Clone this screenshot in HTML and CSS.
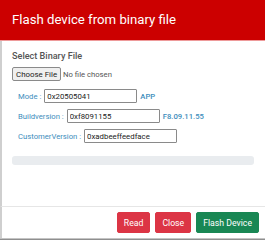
FILE: index.html
```html
<!DOCTYPE html>
<html>
<head>
<meta charset="utf-8">
<link rel="stylesheet" href="styles.css">
</head>
<body>
<div class="dialog">
  <div class="modal-header">
    <h5 class="modal-title">Flash device from binary file</h5>
  </div>
  <div class="modal-body">
    <div class="section-label">Select Binary File</div>
    <input class="file-input" type="file">
    <div class="fields">
      <div class="field-row">
        <span class="field-label">Mode :</span>
        <input class="field-input" type="text" value="0x20505041">
        <span class="field-extra">APP</span>
      </div>
      <div class="field-row">
        <span class="field-label">Buildversion :</span>
        <input class="field-input" type="text" value="0xf8091155">
        <span class="field-extra">F8.09.11.55</span>
      </div>
      <div class="field-row">
        <span class="field-label">CustomerVersion :</span>
        <input class="field-input" type="text" value="0xadbeeffeedface">
      </div>
    </div>
    <div class="progress"></div>
  </div>
  <div class="modal-footer">
    <button class="btn btn-danger">Read</button>
    <button class="btn btn-danger">Close</button>
    <button class="btn btn-success">Flash Device</button>
  </div>
</div>
</body>
</html>
```

FILE: styles.css
```css
* { box-sizing: border-box; }
html, body {
  margin: 0;
  padding: 0;
  background: #8f8f8f;
  font-family: Roboto, "Liberation Sans", sans-serif;
}
.dialog {
  width: 265px;
  height: 239px;
  background: #fff;
  display: flex;
  flex-direction: column;
  border-bottom: 1px solid #c4c4c4;
}
.modal-header {
  height: 41px;
  background: #cc0000;
  border-bottom: 1px solid #ee9a9a;
  padding-left: 12px;
}
.modal-title {
  margin: 0;
  font-size: 13.2px;
  font-weight: 400;
  line-height: 40px;
  color: #fff;
}
.modal-body {
  flex: 1;
  border-left: 2px solid #cfcfcf;
  padding: 9px 11px 0 10px;
}
.section-label {
  font-size: 9.1px;
  font-weight: 500;
  line-height: 12px;
  color: #555;
}
.file-input {
  display: block;
  margin-top: 5px;
  font-family: Roboto, "Liberation Sans", sans-serif;
  font-size: 7.7px;
  color: #555;
  height: 14px;
}
.file-input::file-selector-button {
  font-family: Roboto, "Liberation Sans", sans-serif;
  font-size: 7.9px;
  color: #222;
  background: #efefef;
  border: 1px solid #8a8a8a;
  border-radius: 2px;
  padding: 0 3px;
  height: 14px;
  margin-right: 2px;
}
.fields {
  margin-top: 8px;
  padding-left: 6px;
  display: flex;
  flex-direction: column;
  gap: 6px;
}
.field-row {
  display: flex;
  align-items: center;
  gap: 3px;
  height: 14px;
}
.field-label, .field-extra {
  font-size: 7.7px;
  color: #3c8dbc;
}
.field-extra { font-weight: 500; }
.field-input {
  width: 93px;
  height: 14px;
  border: 1px solid #8a8a8a;
  border-radius: 1px;
  padding: 0 2px;
  font-family: Roboto, "Liberation Sans", sans-serif;
  font-size: 7.8px;
  color: #222;
  outline: none;
}
.progress {
  margin-top: 12.5px;
  height: 9px;
  background: #e9ecef;
  border-radius: 3px;
}
.modal-footer {
  border-left: 2px solid #cfcfcf;
  border-top: 1px solid #e6e6e6;
  padding: 5px 6px 5px 0;
  display: flex;
  justify-content: flex-end;
  gap: 5px;
}
.btn {
  height: 21px;
  padding: 0 6px;
  border-radius: 2px;
  font-family: Roboto, "Liberation Sans", sans-serif;
  font-size: 8.7px;
  color: #fff;
  cursor: pointer;
}
.btn-danger { background: #dc3545; border: 1px solid #dc3545; }
.btn-success { background: #198754; border: 1px solid #198754; }
```
